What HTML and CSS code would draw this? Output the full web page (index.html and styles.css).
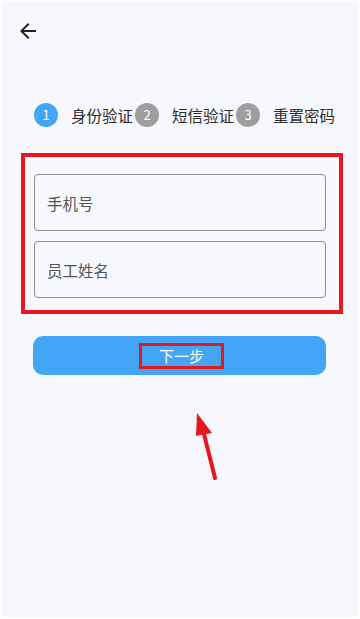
FILE: index.html
```html
<!DOCTYPE html>
<html lang="zh-CN">

<head>
    <meta charset="UTF-8">
    <title>找回密码</title>
    <link rel="stylesheet" href="styles.css">
</head>

<body>
    <div class="page">
        <div class="topbar">
            <svg class="back" viewBox="0 0 24 24" width="24" height="24">
                <path d="M20 11H7.83l5.59-5.59L12 4l-8 8 8 8 1.41-1.41L7.83 13H20v-2z" fill="#222" />
            </svg>
        </div>

        <div class="steps">
            <span class="step-num active">1</span>
            <span class="step-label">身份验证</span>
            <span class="step-num">2</span>
            <span class="step-label">短信验证</span>
            <span class="step-num">3</span>
            <span class="step-label">重置密码</span>
        </div>

        <div class="form-box">
            <div class="field">手机号</div>
            <div class="field">员工姓名</div>
        </div>

        <button class="next"><span class="next-text">下一步</span></button>

        <!-- 标注箭头 -->
        <svg class="pointer" width="40" height="80" viewBox="0 0 40 80">
            <line x1="35" y1="78" x2="23" y2="30" stroke="#e8161f" stroke-width="4" stroke-linecap="round" />
            <polygon points="17,13 16,36 32,33" fill="#e8161f" />
        </svg>
    </div>
</body>

</html>
```

FILE: styles.css
```css
html,
body {
    margin: 0;
    background: #ffffff;
}

body {
    font-family: "Noto Sans CJK SC", "Noto Sans", sans-serif;
    color: #333;
}

.page {
    position: relative;
    height: 616px;
    margin: 1px;
    background-color: #f7f8fd;
    overflow: hidden;
}

.topbar {
    padding: 18px 0 0 15px;
    height: 24px;
}

.back {
    display: block;
}

.steps {
    display: flex;
    align-items: center;
    margin-top: 60px;
    padding-left: 33px;
    height: 24px;
}

.step-num {
    width: 24px;
    height: 24px;
    border-radius: 50%;
    background-color: #9e9e9e;
    color: #fff;
    font-size: 13px;
    line-height: 24px;
    text-align: center;
    flex-shrink: 0;
}

.step-num.active {
    background-color: #42a5f5;
}

.step-label {
    font-size: 15.5px;
    margin: 0 2px 0 13px;
    color: #2b2b2b;
    white-space: nowrap;
}

.form-box {
    box-sizing: border-box;
    margin: 26px 0 0 20px;
    width: 322px;
    border: 4px solid #e8161f;
    padding: 17px 13px 12px 9px;
}

.field {
    height: 55px;
    border: 1px solid #8c8c90;
    border-radius: 4px;
    padding-left: 12px;
    display: flex;
    align-items: center;
    font-size: 15.5px;
    color: #555;
}

.field + .field {
    margin-top: 10px;
}

.next {
    display: flex;
    align-items: center;
    justify-content: center;
    margin: 22px 0 0 32px;
    width: 293px;
    height: 39px;
    border: none;
    border-radius: 10px;
    background-color: #42a5f5;
    padding: 0;
    cursor: pointer;
}

.next-text {
    box-sizing: border-box;
    width: 85px;
    height: 26px;
    margin-left: 4px;
    border: 3px solid #e8161f;
    color: #fff;
    font-family: "Noto Sans CJK SC", sans-serif;
    font-size: 15px;
    line-height: 20px;
    text-align: center;
}

.pointer {
    position: absolute;
    left: 179px;
    top: 399px;
}
```
